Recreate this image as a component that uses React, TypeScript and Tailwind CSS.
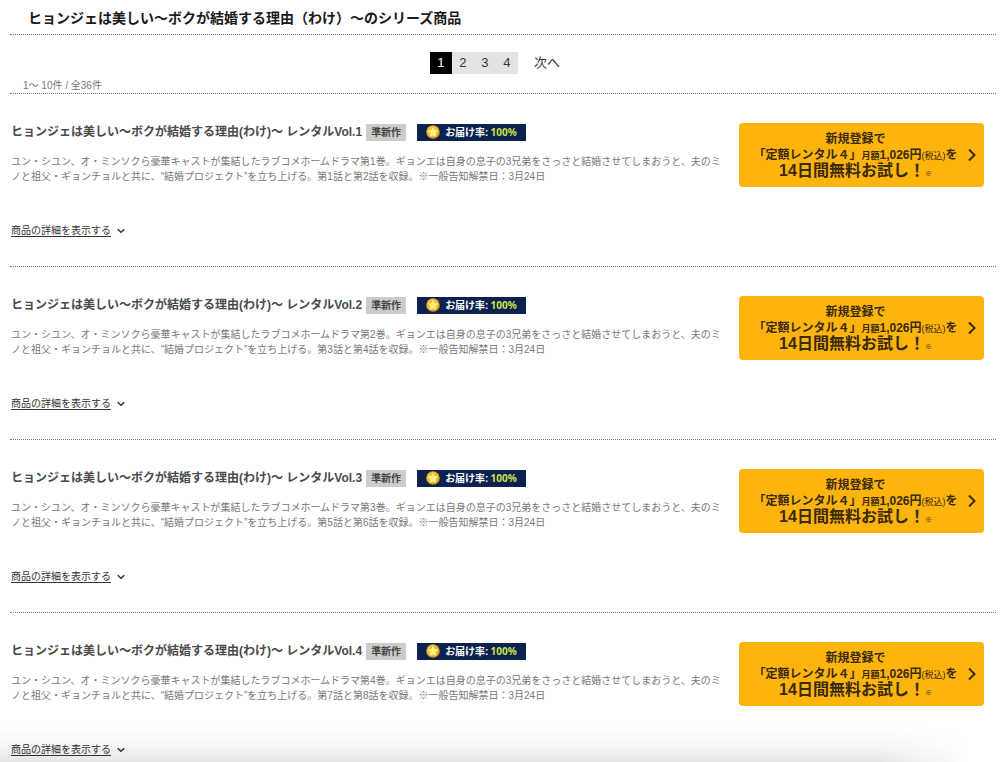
const volumes = [
    { vol: 1, episodes: ['1', '2'] },
    { vol: 2, episodes: ['3', '4'] },
    { vol: 3, episodes: ['5', '6'] },
    { vol: 4, episodes: ['7', '8'] },
];

function StarIcon() {
    return (
        <svg viewBox="0 0 14 14" className="h-3.5 w-3.5 shrink-0" aria-hidden="true">
            <circle cx="7" cy="7" r="6.8" fill="#d9961c" />
            <circle cx="6.7" cy="6.5" r="5.8" fill="#f5bd2f" />
            <path d="M7 1.6l1.6 3.5 3.8.5-2.8 2.6.7 3.8L7 10.2 3.7 12l.7-3.8-2.8-2.6 3.8-.5z" fill="#fff08a" />
        </svg>
    );
}

function TrialButton() {
    return (
        <a
            href="#trial"
            className="flex w-[245px] shrink-0 items-center self-start rounded bg-[#fdb50d] py-2 pl-1.5 pr-1.5 text-center text-xs/4 font-bold text-[#3a2a08]"
        >
            <span className="flex-1 whitespace-nowrap">
                <span className="block">新規登録で</span>
                <span className="flex items-baseline justify-center h-4">
                    <span>「定額レンタル４」</span>
                    <span className="text-[9px]">月額</span>
                    <span>1,026円</span>
                    <span className="text-[9px] font-normal">(税込)</span>
                    <span>を</span>
                </span>
                <span className="flex h-4 items-baseline justify-center text-base/4">
                    <span>14日間無料お試し！</span>
                    <span className="text-[7px]">※</span>
                </span>
            </span>
            <svg viewBox="0 0 12 16" className="h-4 w-3 shrink-0" fill="none" stroke="#3a2a08" strokeWidth="2" aria-hidden="true">
                <path d="M3 2.5l5.5 5.5L3 13.5" />
            </svg>
        </a>
    );
}

function VolumeRow({ vol, episodes }: { vol: number; episodes: string[] }) {
    const title = `ヒョンジェは美しい〜ボクが結婚する理由(わけ)〜 レンタルVol.${vol}`;
    const description = `ユン・シユン、オ・ミンソクら豪華キャストが集結したラブコメホームドラマ第${vol}巻。ギョンエは自身の息子の3兄弟をさっさと結婚させてしまおうと、夫のミノと祖父・ギョンチョルと共に、“結婚プロジェクト”を立ち上げる。第${episodes[0]}話と第${episodes[1]}話を収録。※一般告知解禁日：3月24日`;

    return (
        <li className="flex border-b border-dotted border-[#777] pt-[29px] pr-3 pb-7 last:border-b-0 last:pb-0">
            <div className="flex-1 pr-2.5 pl-px">
                <div className="flex h-[18px] items-center">
                    <h2 className="text-xs font-bold whitespace-nowrap text-[#4a4a4a]">{title}</h2>
                    <span className="ml-1 flex h-[17px] items-center bg-[#ccc] px-[5px] text-[10px] font-bold text-[#444]">
                        準新作
                    </span>
                    <span className="ml-[11px] flex h-[17px] w-[109px] items-center bg-[#0b2250] pl-[9px] text-[10px] font-bold whitespace-nowrap text-white">
                        <StarIcon />
                        <span className="ml-[5px]">お届け率:</span>
                        <span className="ml-0.5 font-['Noto_Sans',sans-serif] text-[#cde34a]">100%</span>
                    </span>
                </div>
                <p className="mt-[13px] text-[10px]/[15px] text-[#777]">{description}</p>
                <button type="button" className="mt-[39px] flex items-center gap-1.5 text-[10px]/[15px] text-[#333]">
                    <span className="underline underline-offset-2">商品の詳細を表示する</span>
                    <svg viewBox="0 0 8 6" className="h-1.5 w-2" fill="none" stroke="#333" strokeWidth="1.5" aria-hidden="true">
                        <path d="M.7 1.2L4 4.2l3.3-3" />
                    </svg>
                </button>
            </div>
            <TrialButton />
        </li>
    );
}

export default function App() {
    return (
        <div className="min-h-screen bg-white pr-1 pl-2.5 font-['Liberation_Sans','Noto_Sans_CJK_JP',sans-serif]" lang="ja">
            <h1 className="border-b border-dotted border-[#777] pt-2 pb-1.5 pl-[18px] text-sm/5 font-bold text-[#1a1a1a]">
                ヒョンジェは美しい〜ボクが結婚する理由（わけ）〜のシリーズ商品
            </h1>
            <div className="border-b border-dotted border-[#777] pt-[17px]">
                <nav className="flex justify-center pr-4 text-[13px]/[22px] text-[#333]">
                    <span className="w-[22px] bg-black text-center text-white">1</span>
                    {[2, 3, 4].map((page) => (
                        <a key={page} href={`#page${page}`} className="w-[22px] bg-[#e3e3e3] text-center">
                            {page}
                        </a>
                    ))}
                    <a href="#next" className="ml-4">次へ</a>
                </nav>
                <p className="mt-1 pl-[13px] text-[10px]/[15px] text-[#777]">1〜 10件 / 全36件</p>
            </div>
            <ul>
                {volumes.map((item) => (
                    <VolumeRow key={item.vol} {...item} />
                ))}
            </ul>
            {/* fade at the bottom of the window */}
            <div className="pointer-events-none fixed inset-x-0 bottom-0 h-9 bg-linear-to-t from-black/10 via-black/3 to-transparent [mask-image:linear-gradient(to_right,black_88%,transparent_97%)]" />
        </div>
    );
}
